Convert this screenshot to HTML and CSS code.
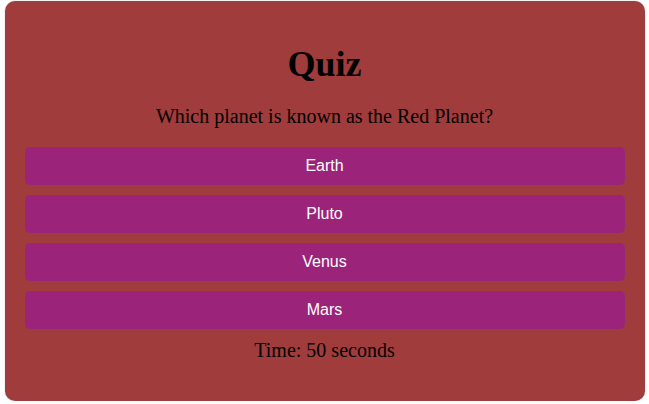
FILE: index.html
```html
<!DOCTYPE html>
<html>
<head>
<meta charset="utf-8">
<link rel="stylesheet" href="styles.css">
</head>
<body>
<div class="quiz">
  <h1 class="title">Quiz</h1>
  <p class="question">Which planet is known as the Red Planet?</p>
  <div class="options">
    <button class="option">Earth</button>
    <button class="option">Pluto</button>
    <button class="option">Venus</button>
    <button class="option">Mars</button>
  </div>
  <p class="timer">Time: 50 seconds</p>
</div>
</body>
</html>
```
FILE: styles.css
```css
html, body {
  margin: 0;
  padding: 0;
  background: #ffffff;
}
body {
  display: flex;
  justify-content: center;
  padding-top: 1px;
  font-family: "Liberation Serif", "Times New Roman", serif;
}
.quiz {
  width: 600px;
  height: 360px;
  padding: 20px;
  background: #a03c3c;
  border-radius: 10px;
  box-shadow: 0 0 2px rgba(0,0,0,0.2);
  text-align: center;
  color: #000;
}
.title {
  font-size: 36px;
  font-weight: bold;
  margin: 23px 0 0;
  line-height: 41px;
}
.question {
  font-size: 20px;
  margin: 20px 0 0;
  line-height: 23px;
}
.options {
  display: flex;
  flex-direction: column;
  gap: 10px;
  margin-top: 19px;
}
.option {
  display: block;
  width: 100%;
  height: 38px;
  border: none;
  border-radius: 5px;
  background: #9b2379;
  color: #fff;
  font-family: "Liberation Sans", Arial, sans-serif;
  font-size: 16px;
  padding: 0;
}
.timer {
  font-size: 20px;
  margin: 10px 0 0;
  line-height: 23px;
}
```
